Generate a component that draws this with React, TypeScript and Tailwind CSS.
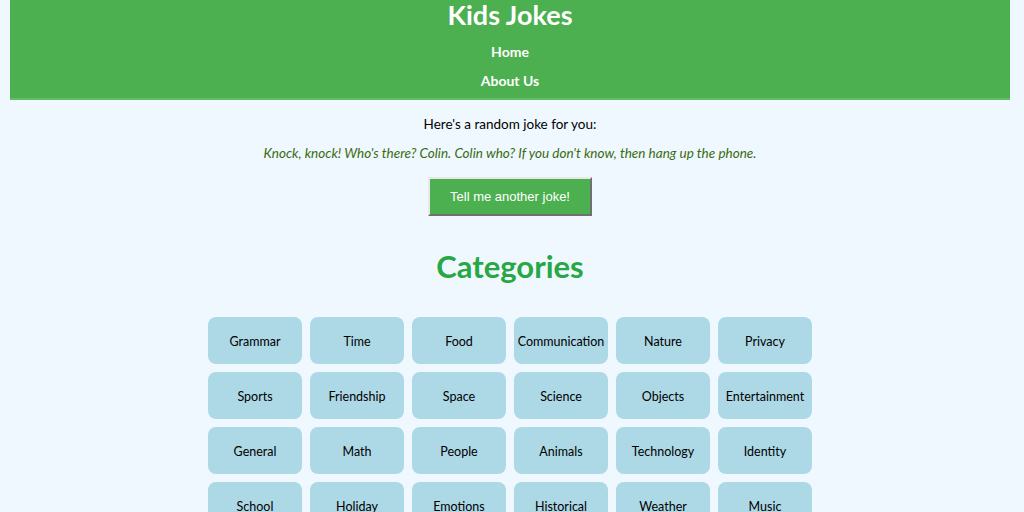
import React from "react"

const categories = [
  "Grammar", "Time", "Food", "Communication", "Nature", "Privacy",
  "Sports", "Friendship", "Space", "Science", "Objects", "Entertainment",
  "General", "Math", "People", "Animals", "Technology", "Identity",
  "School", "Holiday", "Emotions", "Historical", "Weather", "Music",
]

export default function App() {
  return (
    <div className="min-h-screen bg-[#f0f8ff] pl-[10px] pr-[14px] font-['Comic_Sans_MS',Lato,sans-serif] text-black">
      <header className="bg-[#4caf50] text-white text-center h-[100px] border-b-2 border-[#5fc063]">
        <h1 className="text-[27px] font-bold leading-[29px]">Kids Jokes</h1>
        <nav>
          <ul className="text-[14px] font-bold">
            <li className="leading-[29px] mt-[8px]">Home</li>
            <li className="leading-[29px]">About Us</li>
          </ul>
        </nav>
      </header>

      <main className="flex flex-col items-center">
        <p className="text-[13.5px] leading-[20px] mt-[14px]">Here's a random joke for you:</p>
        <p className="text-[13.5px] leading-[20px] mt-[9px] italic text-[#3a6b10]">
          Knock, knock! Who's there? Colin. Colin who? If you don't know, then hang up the phone.
        </p>
        <button className="mt-[14px] w-[164px] h-[39px] pt-[1px] bg-[#4caf50] text-white text-[13px] font-['Liberation_Sans',Arial,sans-serif] border-2 border-t-[#e8e8e8] border-l-[#e8e8e8] border-r-[#707070] border-b-[#707070]">
          Tell me another joke!
        </button>

        <h2 className="text-[31px] font-bold text-[#27a745] leading-[40px] mt-[30px]">Categories</h2>

        <div className="grid grid-cols-[repeat(6,94px)] auto-rows-[47px] gap-[8px] mt-[31px] pb-8">
          {categories.map(c => (
            <div
              key={c}
              className="bg-[#add8e6] rounded-[8px] flex items-center justify-center pt-[3px] text-[12.5px] whitespace-nowrap"
            >
              {c}
            </div>
          ))}
        </div>
      </main>
    </div>
  )
}
